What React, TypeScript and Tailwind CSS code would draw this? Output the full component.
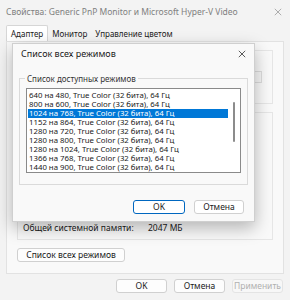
import React from 'react';

const modes = [
  '640 на 480, True Color (32 бита), 64 Гц',
  '800 на 600, True Color (32 бита), 64 Гц',
  '1024 на 768, True Color (32 бита), 64 Гц',
  '1152 на 864, True Color (32 бита), 64 Гц',
  '1280 на 720, True Color (32 бита), 64 Гц',
  '1280 на 800, True Color (32 бита), 64 Гц',
  '1280 на 1024, True Color (32 бита), 64 Гц',
  '1366 на 768, True Color (32 бита), 64 Гц',
  '1440 на 900, True Color (32 бита), 64 Гц',
];

const font = { fontFamily: '"Noto Sans", "DejaVu Sans", sans-serif' };

const CloseIcon: React.FC<{ className?: string }> = ({ className }) => (
  <svg viewBox="0 0 10 10" className={className} fill="none" stroke="currentColor" strokeWidth="1">
    <path d="M1 1 L9 9 M9 1 L1 9" />
  </svg>
);

export default function App() {
  const selected = 2;

  return (
    <div
      className="relative w-[290px] h-[300px] bg-[#f3f3f3] flex flex-col overflow-hidden text-[8.5px] text-[#1a1a1a]"
      style={font}
    >
      {/* Title bar */}
      <div className="h-[24px] flex items-center justify-between pl-[6px] pr-[8px] text-[#808080]">
        <span>Свойства: Generic PnP Monitor и Microsoft Hyper-V Video</span>
        <CloseIcon className="w-[8px] h-[8px] text-[#9a9a9a]" />
      </div>

      {/* Tabs */}
      <div className="flex items-end h-[17px] pl-[6px] text-[8px]">
        <div className="h-[16px] px-[4px] flex items-center bg-white border border-b-0 border-[#d6d6d6] rounded-t-[2px]">
          Адаптер
        </div>
        <div className="h-[14px] px-[4px] flex items-center">Монитор</div>
        <div className="h-[14px] px-[4px] flex items-center">Управление цветом</div>
      </div>

      {/* Tab panel (behind dialog) */}
      <div className="mx-[6px] h-[233px] bg-[#f9f9f9] border border-[#e2e2e2] flex flex-col px-[10px] pt-[8px]">
        <div className="h-[54px] border border-[#e6e6e6] flex justify-end items-center pr-[10px]">
          <div className="w-[20px] h-[12px] border border-[#dcdcdc] bg-[#f6f6f6]" />
        </div>
        <div className="mt-[8px] h-[128px] border border-[#e6e6e6] flex flex-col justify-end pb-[4px] pl-[5px]">
          <div className="flex">
            <span className="w-[125px]">Общей системной памяти:</span>
            <span>2047 МБ</span>
          </div>
        </div>
        <div className="mt-[8px] w-[108px] h-[14px] border border-[#d0d0d0] bg-[#fdfdfd] rounded-[3px] flex items-center justify-center">
          Список всех режимов
        </div>
      </div>

      {/* Bottom buttons */}
      <div className="flex justify-end gap-[7px] pr-[7px] pt-[5px]">
        <div className="w-[51px] h-[14px] border border-[#d0d0d0] bg-[#fdfdfd] rounded-[3px] flex items-center justify-center">OK</div>
        <div className="w-[51px] h-[14px] border border-[#d0d0d0] bg-[#fdfdfd] rounded-[3px] flex items-center justify-center">Отмена</div>
        <div className="w-[51px] h-[14px] border border-[#e4e4e4] bg-[#f7f7f7] rounded-[3px] flex items-center justify-center text-[#b0b0b0]">Применить</div>
      </div>

      {/* Modal dialog */}
      <div className="absolute left-[12px] top-[43px] w-[243px] h-[179px] bg-[#f9f9f9] border border-[#cfcfcf] shadow-[0_6px_16px_rgba(0,0,0,0.28)] flex flex-col">
        <div className="h-[20px] flex items-center justify-between pl-[8px] pr-[8px] text-[9px]">
          <span>Список всех режимов</span>
          <CloseIcon className="w-[8px] h-[8px] text-[#333]" />
        </div>
        <div className="mx-[6px] mt-[14px] h-[107px] border border-[#dadada] relative px-[6px] pt-[9px]">
          <span className="absolute -top-[6px] left-[5px] px-[2px] bg-[#f9f9f9] text-[8px] text-[#333]">
            Список доступных режимов
          </span>
          <div className="h-[85px] bg-white border border-[#8a8a8a] flex">
            <div className="flex-1 flex flex-col pt-[2px] pl-[1px] text-[7.8px] leading-[9px]">
              {modes.map((m, i) => (
                <div
                  key={m}
                  className={i === selected ? 'h-[9px] bg-[#0078d7] text-white pl-[1px]' : 'h-[9px] pl-[1px]'}
                >
                  {m}
                </div>
              ))}
            </div>
            <div className="w-[12px] flex justify-center pt-[13px]">
              <div className="w-[2px] h-[40px] bg-[#8c8c8c] rounded-full" />
            </div>
          </div>
        </div>
        <div className="flex justify-end gap-[9px] pr-[10px] mt-[15px]">
          <div className="w-[52px] h-[14px] border border-[#0067c0] bg-white rounded-[3px] flex items-center justify-center">OK</div>
          <div className="w-[50px] h-[14px] border border-[#d0d0d0] bg-white rounded-[3px] flex items-center justify-center">Отмена</div>
        </div>
      </div>
    </div>
  );
}
